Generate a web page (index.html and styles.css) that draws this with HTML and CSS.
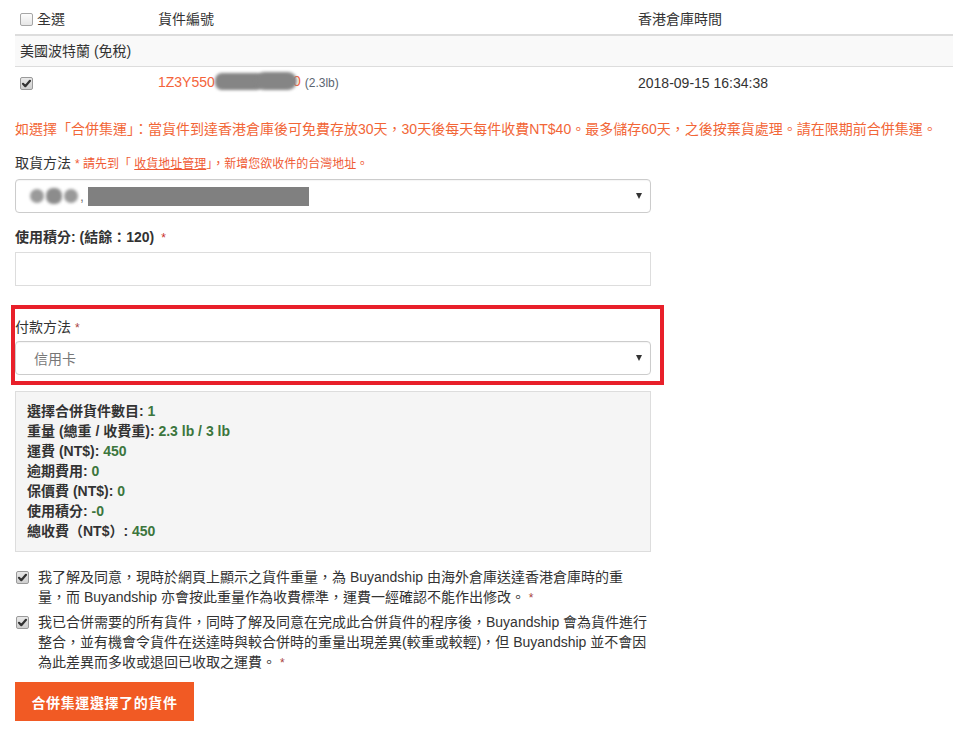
FILE: index.html
```html
<!DOCTYPE html>
<html lang="zh-Hant">
<head>
<meta charset="utf-8">
<title>合併集運</title>
<link rel="stylesheet" href="styles.css">
</head>
<body>
<div class="page">
  <table class="parcels">
    <colgroup>
      <col class="c1"><col class="c2"><col class="c3">
    </colgroup>
    <thead>
      <tr>
        <th><span class="cb"></span><span class="cb-label">全選</span></th>
        <th>貨件編號</th>
        <th>香港倉庫時間</th>
      </tr>
    </thead>
    <tbody>
      <tr class="group">
        <td colspan="3">美國波特蘭 (免稅)</td>
      </tr>
      <tr class="item">
        <td><span class="cb checked"><svg viewBox="0 0 13 13" width="13" height="13"><path d="M3 6.8 L5.3 9.2 L10 3.8" fill="none" stroke="#333" stroke-width="2.2" stroke-linecap="round" stroke-linejoin="round"/></svg></span></td>
        <td><span class="track">1Z3Y550<span class="mask-wrap"><span class="blur b1"></span><span class="blur b2"></span><span class="track-tail">0</span></span></span> <span class="weight">(2.3lb)</span></td>
        <td>2018-09-15 16:34:38</td>
      </tr>
    </tbody>
  </table>

  <div class="form">
    <p class="notice">如選擇「合併集運」：當貨件到達香港倉庫後可免費存放30天，30天後每天每件收費NT$40。最多儲存60天，之後按棄貨處理。請在限期前合併集運。</p>

    <div class="group-field first">
      <label class="lbl">取貨方法 <span class="hint">* 請先到「 <a class="hint-link">收貨地址管理</a>」，新增您欲收件的台灣地址。</span></label>
      <div class="select">
        <span class="addr-blur"><span class="blur b3"></span><span class="blur b4"></span><span class="blur b5"></span></span>
        <span class="comma">,</span>
        <span class="addr-bar"></span>
        <span class="arrow"></span>
      </div>
    </div>

    <div class="group-field">
      <label class="lbl bold">使用積分: (結餘：120) <span class="req">*</span></label>
      <div class="input"></div>
    </div>

    <div class="highlight">
      <label class="lbl">付款方法 <span class="req small">*</span></label>
      <div class="select">
        <span class="placeholder">信用卡</span>
        <span class="arrow"></span>
      </div>
    </div>

    <div class="summary">
      <div>選擇合併貨件數目: <span class="val">1</span></div>
      <div>重量 (總重 / 收費重): <span class="val">2.3 lb / 3 lb</span></div>
      <div>運費 (NT$): <span class="val">450</span></div>
      <div>逾期費用: <span class="val">0</span></div>
      <div>保價費 (NT$): <span class="val">0</span></div>
      <div>使用積分: <span class="val">-0</span></div>
      <div>總收費（NT$）: <span class="val">450</span></div>
    </div>

    <div class="agree">
      <span class="cb checked"><svg viewBox="0 0 13 13" width="13" height="13"><path d="M3 6.8 L5.3 9.2 L10 3.8" fill="none" stroke="#333" stroke-width="2.2" stroke-linecap="round" stroke-linejoin="round"/></svg></span>
      <p>我了解及同意，現時於網頁上顯示之貨件重量，為 Buyandship 由海外倉庫送達香港倉庫時的重量，而 Buyandship 亦會按此重量作為收費標準，運費一經確認不能作出修改。 <span class="star">*</span></p>
    </div>
    <div class="agree second">
      <span class="cb checked"><svg viewBox="0 0 13 13" width="13" height="13"><path d="M3 6.8 L5.3 9.2 L10 3.8" fill="none" stroke="#333" stroke-width="2.2" stroke-linecap="round" stroke-linejoin="round"/></svg></span>
      <p>我已合併需要的所有貨件，同時了解及同意在完成此合併貨件的程序後，Buyandship 會為貨件進行整合，並有機會令貨件在送達時與較合併時的重量出現差異(較重或較輕)，但 Buyandship 並不會因為此差異而多收或退回已收取之運費。 <span class="star">*</span></p>
    </div>

    <button class="submit" type="button">合併集運選擇了的貨件</button>
  </div>
</div>
</body>
</html>
```

FILE: styles.css
```css
html, body {
  margin: 0;
  padding: 0;
  background: #fff;
}

body {
  font-family: "Liberation Sans", Arial, "Noto Sans CJK TC", sans-serif;
  font-size: 14px;
  color: #333;
}

.page {
  padding-left: 15px;
}

/* ---------- table ---------- */
.parcels {
  width: 100%;
  border-collapse: collapse;
  table-layout: fixed;
}
.c1 { width: 138px; }
.c2 { width: 480px; }

.parcels th {
  font-weight: normal;
  text-align: left;
  height: 30px;
  padding: 4px 0 0 5px;
  vertical-align: middle;
  border-bottom: 2px solid #ddd;
  line-height: 20px;
  white-space: nowrap;
}
.parcels th .cb {
  vertical-align: -2px;
  margin-right: 4px;
}
.parcels td {
  padding: 0 0 0 5px;
  vertical-align: middle;
  line-height: 20px;
  white-space: nowrap;
}
.group td {
  height: 30px;
  background: #f9f9f9;
  border-bottom: 1px solid #ddd;
}
.item td {
  height: 31px;
}
.item .cb {
  vertical-align: -2px;
}

.track {
  color: #f4633a;
  position: relative;
}
.mask-wrap {
  display: inline-block;
  position: relative;
  width: 84px;
  height: 18px;
  vertical-align: -3px;
}
.track-tail {
  position: absolute;
  right: -2px;
  top: 0;
  line-height: 18px;
  color: #f4633a;
}
.blur {
  position: absolute;
  background: #858585;
  filter: blur(1.5px);
  border-radius: 7px;
}
.b1 { left: 0; top: 1px; width: 48px; height: 17px; }
.b2 { left: 40px; top: 0; width: 42px; height: 18px; border-radius: 9px; z-index: 1; }
.weight {
  color: #5a6570;
  font-size: 12px;
  margin-left: 2px;
}

/* ---------- form ---------- */
.form {
  width: 636px;
}
.notice {
  margin: 21px 0 0;
  width: 940px;
  line-height: 20px;
  color: #f26637;
  white-space: nowrap;
}
.group-field {
  margin-top: 14px;
}
.group-field.first {
  margin-top: 14px;
}
.lbl {
  display: block;
  line-height: 20px;
  margin-bottom: 5px;
  color: #333;
}
.group-field.first .lbl {
  margin-bottom: 6px;
}
.lbl.bold {
  font-weight: bold;
}
.hint {
  color: #ef5a34;
  font-size: 12px;
  font-weight: normal;
  line-height: 1;
}
.hint-link {
  text-decoration: underline;
  color: #ef5a34;
}
.req {
  color: #c9302c;
  font-weight: normal;
  font-size: 12px;
  margin-left: 3px;
  line-height: 1;
}
.req.small {
  color: #a94442;
  margin-left: 0;
}

.select {
  position: relative;
  box-sizing: border-box;
  height: 34px;
  border: 1px solid #ccc;
  border-radius: 4px;
  background: #fff;
  display: flex;
  align-items: center;
  padding-left: 14px;
  box-shadow: inset 0 1px 1px rgba(0,0,0,.04);
}
.arrow {
  position: absolute;
  right: 8px;
  top: 13px;
  width: 0;
  height: 0;
  border-left: 3.5px solid transparent;
  border-right: 3.5px solid transparent;
  border-top: 6px solid #333;
}
.addr-blur {
  position: relative;
  display: inline-block;
  width: 50px;
  height: 18px;
}
.b3 { left: 0; top: 2px; width: 14px; height: 14px; background: #9a9a9a; }
.b4 { left: 16px; top: 1px; width: 16px; height: 16px; background: #8c8c8c; }
.b5 { left: 34px; top: 2px; width: 14px; height: 14px; background: #999; }
.comma {
  color: #777;
  margin: 0 2px 0 0;
  line-height: 18px;
}
.addr-bar {
  display: inline-block;
  width: 221px;
  height: 19px;
  background: #808080;
  margin-left: 2px;
}
.placeholder {
  color: #777;
  padding-left: 4px;
}

.input {
  box-sizing: border-box;
  height: 34px;
  border: 1px solid #ddd;
  background: #fff;
}

.highlight {
  margin: 19px 0 0 -4px;
  width: 645px;
  border: 4px solid #e8202a;
  padding: 8px 0 6px 0;
  box-sizing: content-box;
}
.highlight .lbl,
.highlight .select {
  margin-left: 0;
  width: 636px;
}
.highlight .lbl {
  margin-bottom: 4px;
}

.summary {
  margin-top: 6px;
  box-sizing: border-box;
  border: 1px solid #ddd;
  background: #f5f5f5;
  padding: 9px 11px 10px;
  line-height: 20px;
  font-weight: bold;
  color: #333;
}
.summary .val {
  color: #3c763d;
}

.agree {
  display: flex;
  align-items: flex-start;
  margin-top: 15px;
}
.agree.second {
  margin-top: 5px;
}
.agree .cb {
  margin: 4px 9px 0 1px;
  flex: none;
}
.agree p {
  margin: 0;
  width: 610px;
  line-height: 20px;
  color: #333;
}
.star {
  color: #a94442;
  font-size: 12px;
  line-height: 1;
}

.submit {
  display: block;
  margin-top: 10px;
  width: 179px;
  height: 39px;
  border: none;
  background: #f15a24;
  color: #fff;
  font-family: "Liberation Sans", Arial, "Noto Sans CJK TC", sans-serif;
  font-size: 14px;
  font-weight: bold;
  letter-spacing: 0.6px;
  padding: 0;
}

/* ---------- checkbox ---------- */
.cb {
  display: inline-block;
  box-sizing: border-box;
  width: 13px;
  height: 13px;
  border: 1px solid #a6a6a6;
  border-radius: 2px;
  background: linear-gradient(#fcfcfc, #e6e6e6);
  position: relative;
}
.cb.checked {
  background: linear-gradient(#e9e9e9, #cfcfcf);
  border-color: #9a9a9a;
}
.cb svg {
  position: absolute;
  left: -1px;
  top: -1px;
}
```
